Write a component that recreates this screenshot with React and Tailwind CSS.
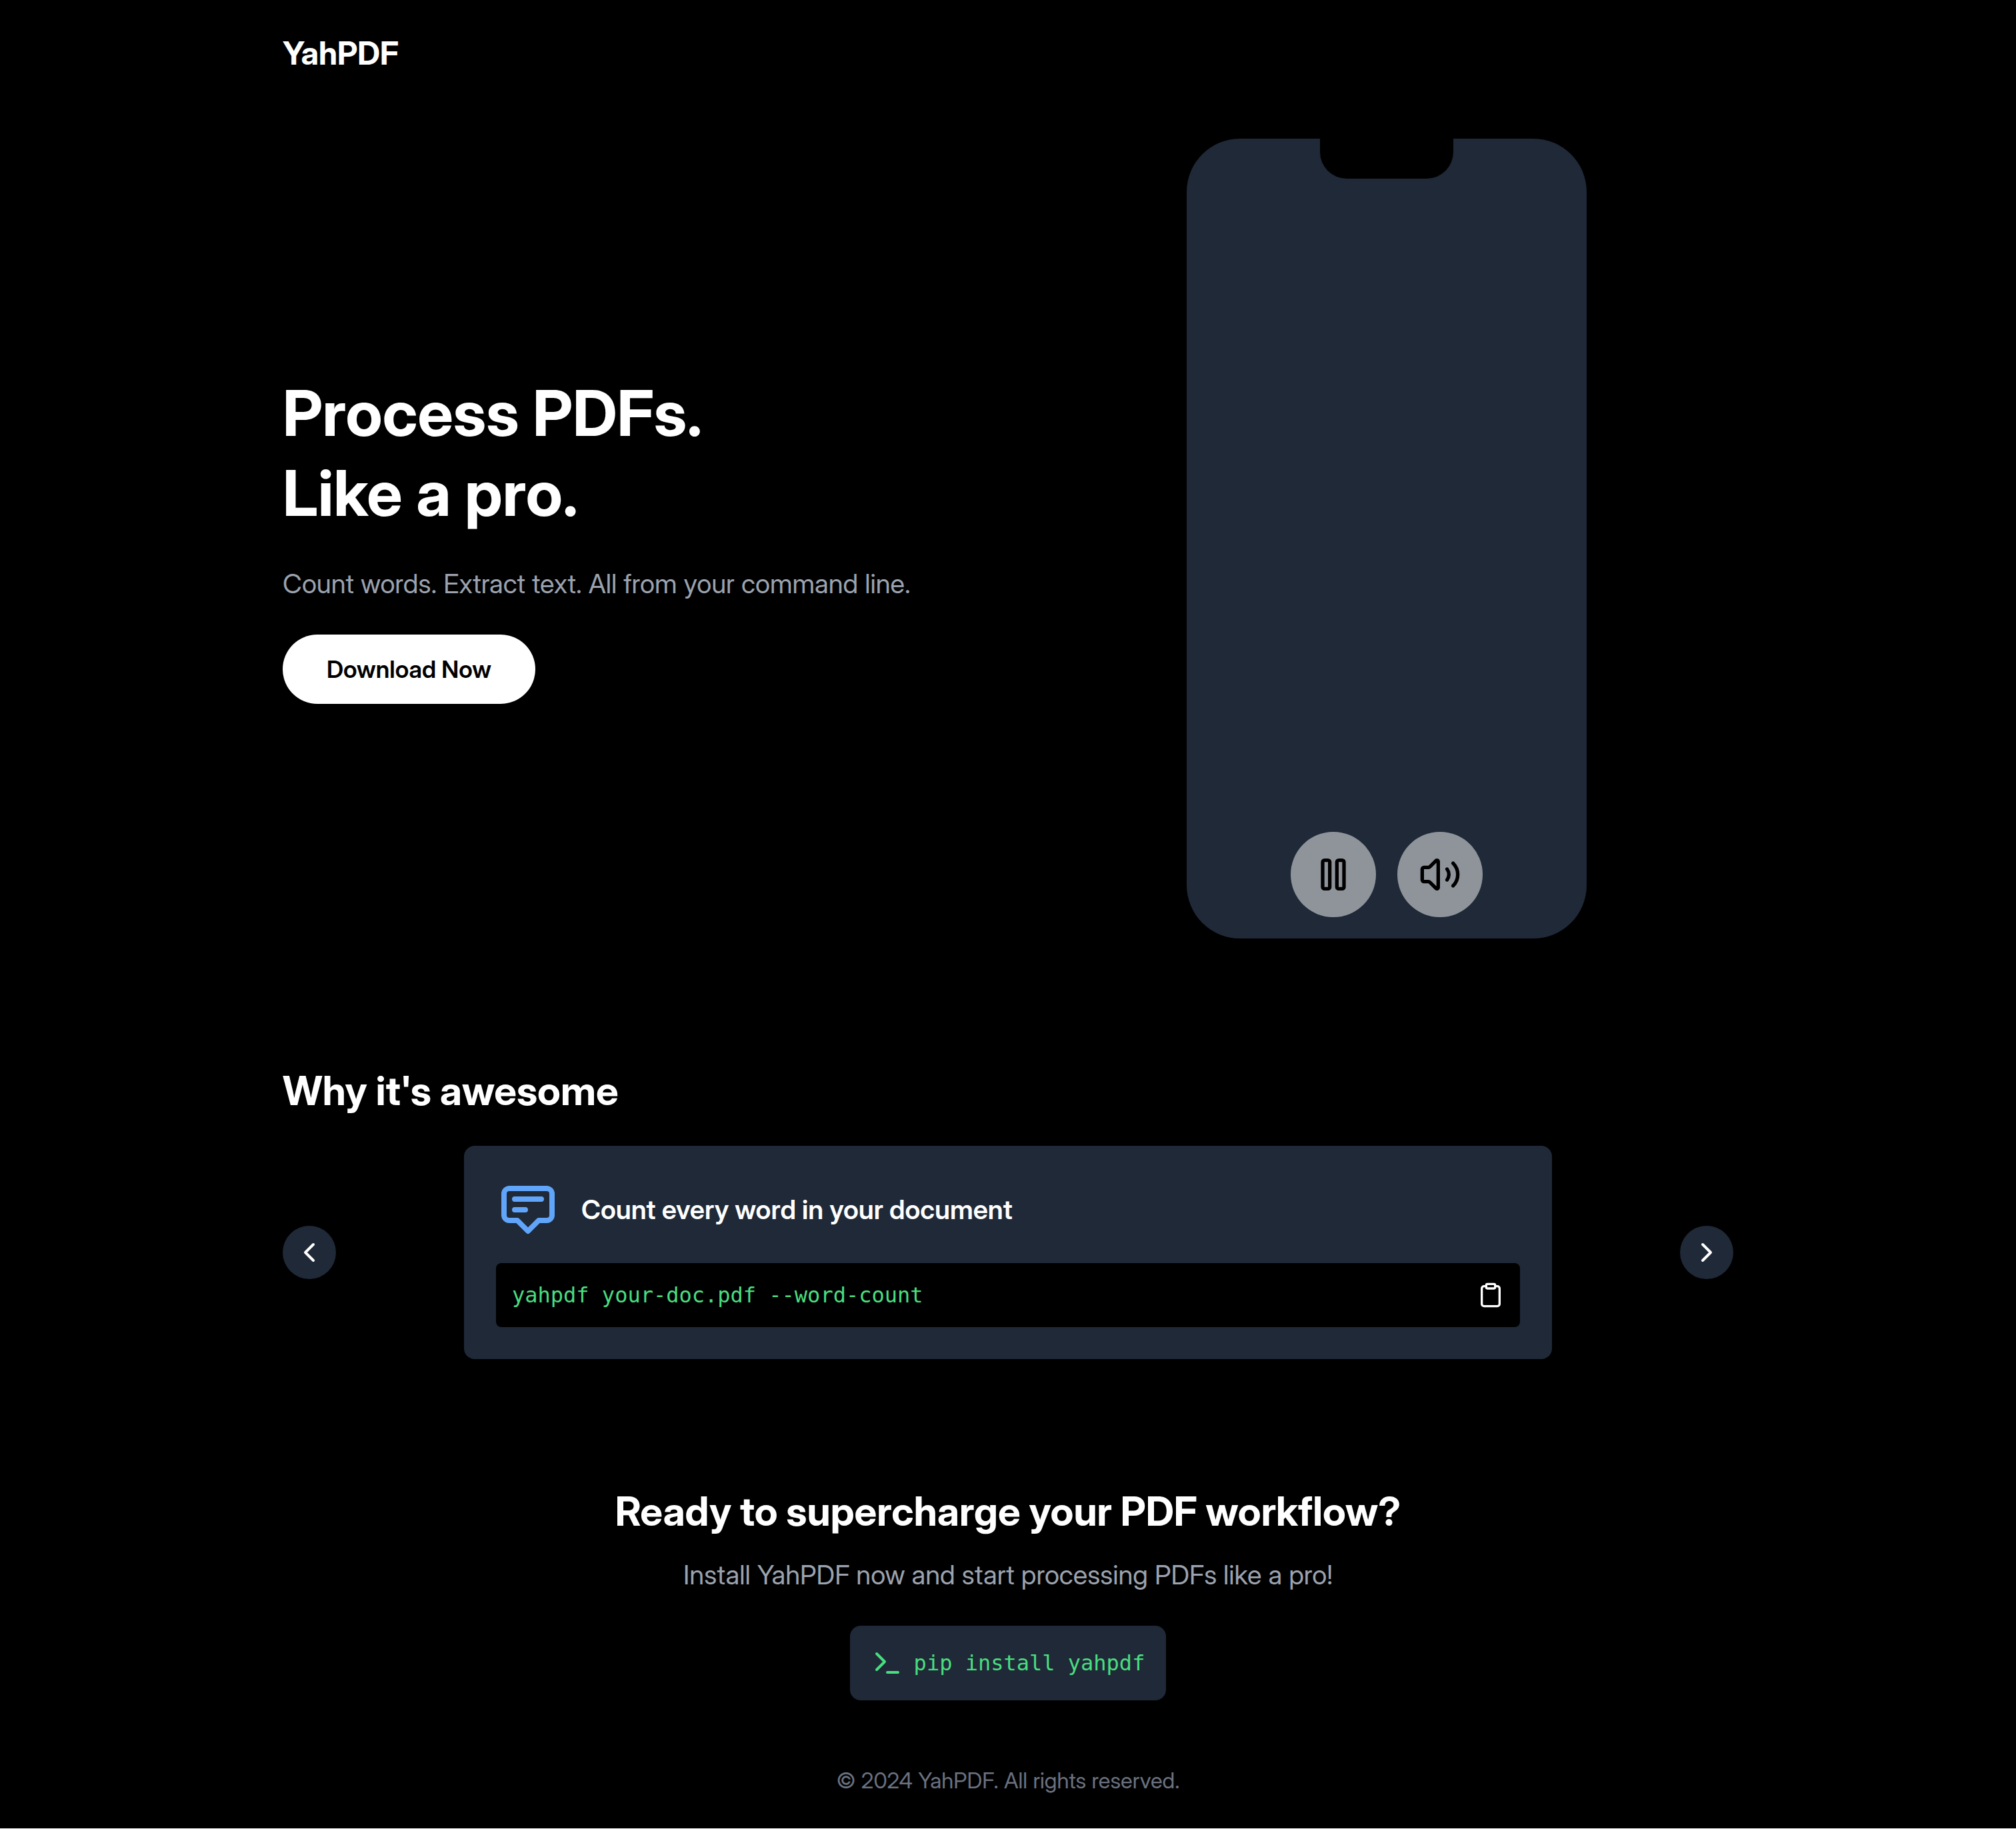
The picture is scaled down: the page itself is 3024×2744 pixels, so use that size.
import { useState } from "react";
import { ChevronLeft, ChevronRight, Clipboard, Volume2 } from "lucide-react";

function PauseIcon({ className }) {
  return (
    <svg
      viewBox="0 0 24 24"
      fill="none"
      stroke="currentColor"
      strokeWidth="2"
      strokeLinecap="round"
      strokeLinejoin="round"
      aria-hidden="true"
      className={className}
    >
      <rect x="14" y="4" width="4" height="16" rx="1" />
      <rect x="6" y="4" width="4" height="16" rx="1" />
    </svg>
  );
}

function AnnotationIcon({ className }) {
  return (
    <svg
      viewBox="0 0 24 24"
      fill="none"
      stroke="currentColor"
      strokeWidth="2"
      strokeLinecap="round"
      strokeLinejoin="round"
      aria-hidden="true"
      className={className}
    >
      <path d="M7 8h10M7 12h4m1 8l-4-4H5a2 2 0 01-2-2V6a2 2 0 012-2h14a2 2 0 012 2v8a2 2 0 01-2 2h-3l-4 4z" />
    </svg>
  );
}

function TerminalIcon({ className }) {
  return (
    <svg
      viewBox="0 0 24 24"
      fill="none"
      stroke="currentColor"
      strokeWidth="2"
      strokeLinecap="round"
      strokeLinejoin="round"
      aria-hidden="true"
      className={className}
    >
      <polyline points="4 17 10 11 4 5" />
      <line x1="12" x2="20" y1="19" y2="19" />
    </svg>
  );
}

function RoundButton({ label, onClick, children }) {
  return (
    <button
      type="button"
      aria-label={label}
      onClick={onClick}
      className="rounded-full bg-[#1f2937] p-4 text-white"
    >
      {children}
    </button>
  );
}

function MediaButton({ label, children }) {
  return (
    <button
      type="button"
      aria-label={label}
      className="rounded-full bg-[#8f949b] p-8 text-black"
    >
      {children}
    </button>
  );
}

function Phone() {
  return (
    <div className="relative flex aspect-[1/2] w-full max-w-[600px] items-end justify-center rounded-[80px] bg-[#1f2937] pb-8">
      <div className="absolute inset-x-0 top-0 mx-auto h-[60px] w-1/3 rounded-b-[40px] bg-black" />
      <div className="flex gap-8">
        <MediaButton label="Pause">
          <PauseIcon className="size-16" />
        </MediaButton>
        <MediaButton label="Mute">
          <Volume2 className="size-16" />
        </MediaButton>
      </div>
    </div>
  );
}

const features = [
  { title: "Count every word in your document", command: "yahpdf your-doc.pdf --word-count" },
];

export default function App() {
  const [index, setIndex] = useState(0);
  const feature = features[index];
  const step = (by) => setIndex((index + by + features.length) % features.length);

  return (
    <div className="bg-black font-['Inter_Display','Inter',sans-serif] text-white">
      <div className="mx-auto max-w-[2304px] px-16">
        <header className="py-12">
          <a href="#" className="block w-fit text-5xl leading-[64px] font-bold">
            YahPDF
          </a>
        </header>

        <main>
          <section className="grid grid-cols-2 items-center gap-24 pt-12">
            <div>
              <h1 className="mb-12 text-[95px] leading-[120px] font-bold">
                Process PDFs.
                <br />
                Like a pro.
              </h1>
              <p className="mb-12 text-[40px] leading-[56px] text-[#9ca3af]">
                Count words. Extract text. All from your command line.
              </p>
              <button
                type="button"
                className="rounded-full bg-white px-[66px] py-6 text-4xl leading-[56px] font-semibold text-black"
              >
                Download Now
              </button>
            </div>
            <div className="flex justify-center">
              <Phone />
            </div>
          </section>

          <section className="pt-48">
            <h2 className="mb-[47px] text-6xl leading-[72px] font-bold">Why it's awesome</h2>
            <div className="flex items-center justify-between">
              <RoundButton label="Previous" onClick={() => step(-1)}>
                <ChevronLeft className="size-12" />
              </RoundButton>
              <article className="w-3/4 rounded-2xl bg-[#1f2937] p-12">
                <div className="mb-8 flex items-center gap-8">
                  <AnnotationIcon className="size-24 text-[#60a5fa]" />
                  <h3 className="text-[40px] leading-[56px] font-semibold">{feature.title}</h3>
                </div>
                <div className="flex items-center justify-between rounded-lg bg-black p-6">
                  <code className="font-['DejaVu_Sans_Mono',monospace] text-[32px] leading-[48px] text-[#4ade80]">
                    {feature.command}
                  </code>
                  <button type="button" aria-label="Copy command">
                    <Clipboard className="size-10" />
                  </button>
                </div>
              </article>
              <RoundButton label="Next" onClick={() => step(1)}>
                <ChevronRight className="size-12" />
              </RoundButton>
            </div>
          </section>

          <section className="pt-48 text-center">
            <h2 className="mb-8 text-6xl leading-[72px] font-bold">
              Ready to supercharge your PDF workflow?
            </h2>
            <p className="mb-12 text-[40px] leading-[56px] text-[#9ca3af]">
              Install YahPDF now and start processing PDFs like a pro!
            </p>
            <div className="mx-auto flex w-fit items-center gap-4 rounded-2xl bg-[#1f2937] p-8 text-[#4ade80]">
              <TerminalIcon className="size-12" />
              <code className="font-['DejaVu_Sans_Mono',monospace] text-[32px] leading-[48px]">
                pip install yahpdf
              </code>
            </div>
          </section>
        </main>

        <footer className="mt-12 py-12 text-center text-[33px] leading-[48px] text-[#6b7280]">
          © 2024 YahPDF. All rights reserved.
        </footer>
      </div>
    </div>
  );
}
